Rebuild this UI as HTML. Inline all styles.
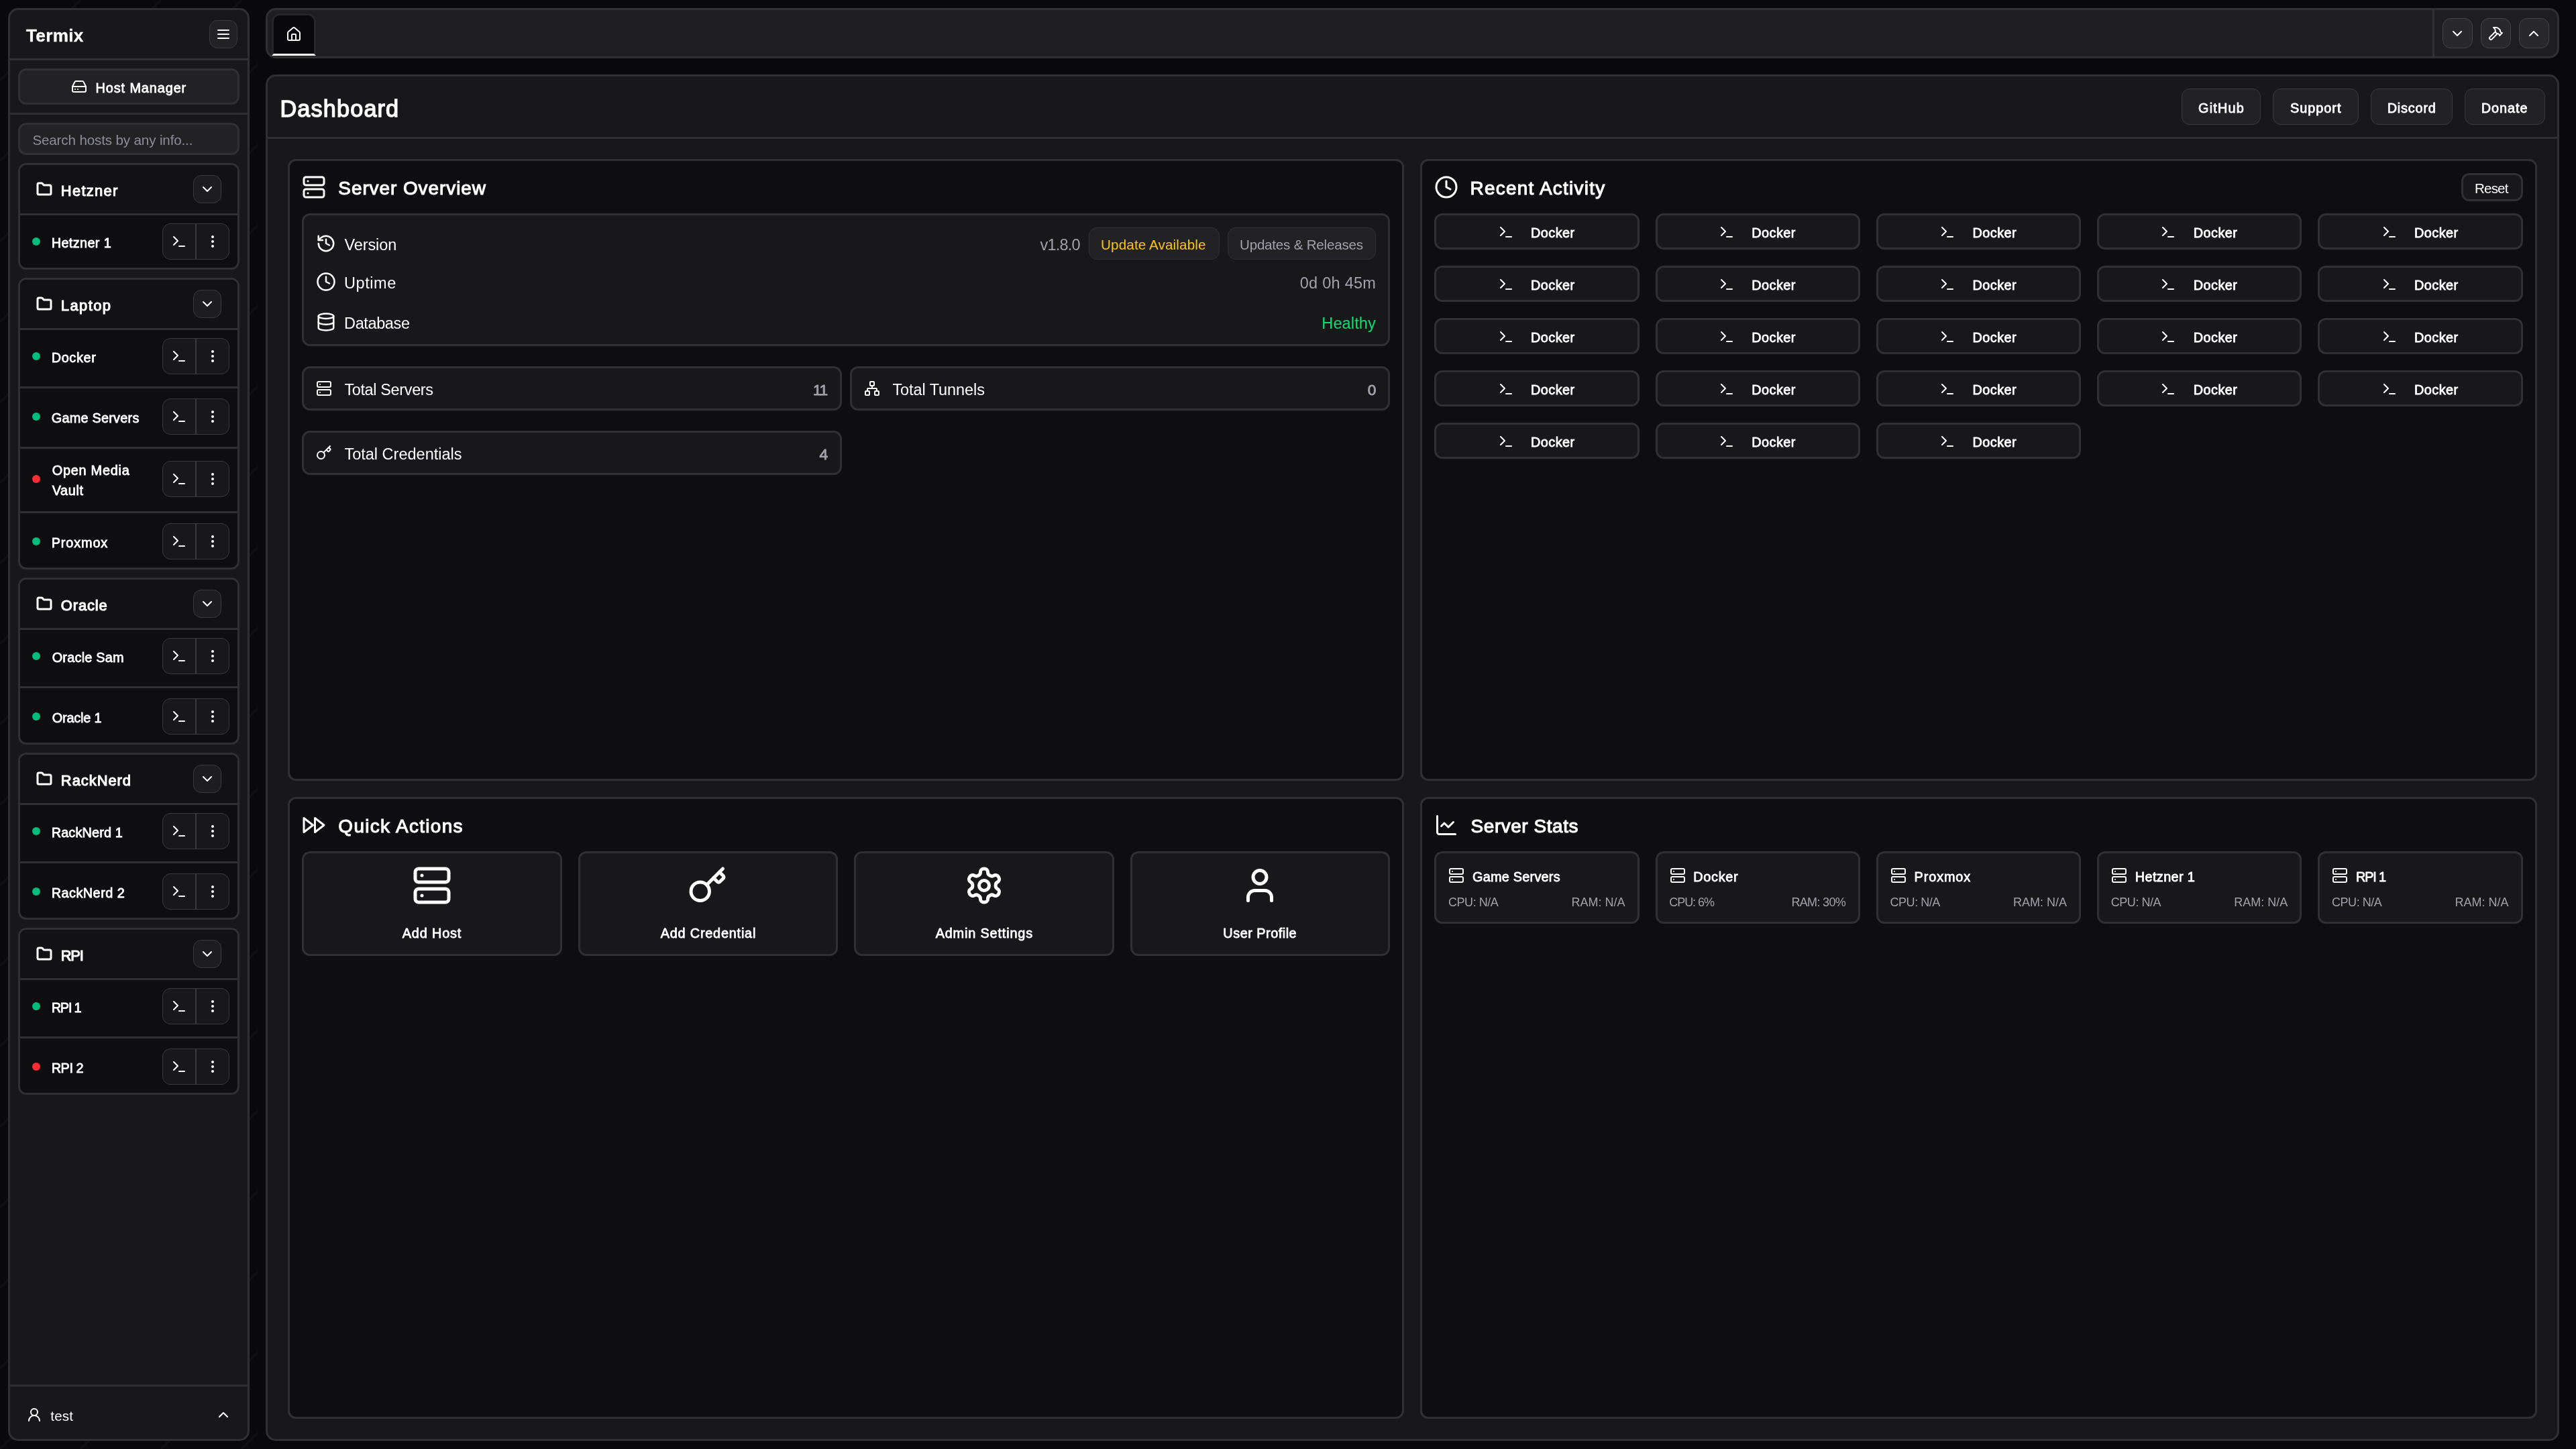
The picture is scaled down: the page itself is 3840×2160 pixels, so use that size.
<!DOCTYPE html>
<html lang="en"><head><meta charset="utf-8"><title>Termix</title><meta name="viewport" content="width=3840"><style>
html,body{margin:0;padding:0;}
body{width:3840px;height:2160px;overflow:hidden;background:#09090b;position:relative;font-family:"Liberation Sans", sans-serif;}
#app{position:absolute;left:0;top:0;width:3840px;height:2160px;overflow:hidden;will-change:transform;}
#app div,#app svg,#app span{position:absolute;}
#app span{white-space:nowrap;}
.pat{background-image:linear-gradient(135deg,transparent 0%,transparent 49%,rgba(255,255,255,.03) 49%,rgba(255,255,255,.03) 51%,transparent 51%,transparent 100%);background-size:120px 120px;}
</style></head><body><div id="app">
<div class="pat" style="left:0;top:0;width:384px;height:2160px"></div>
<div style="left:12px;top:12px;width:360px;height:2136px;background:#18181b;border:3px solid #303032;border-radius:15px;box-sizing:border-box;"></div>
<div style="left:312px;top:30px;width:42px;height:42px;background:#222225;border:1.5px solid #3a3a3d;border-radius:12px;box-sizing:border-box;"></div>
<svg style="left:321px;top:39px" width="24" height="24" viewBox="0 0 24 24" fill="none" stroke="#ffffff" stroke-width="2" stroke-linecap="round" stroke-linejoin="round"><path d="M4 12h16"/><path d="M4 18h16"/><path d="M4 6h16"/></svg>
<div style="left:15px;top:87px;width:354px;height:3px;background:#303032;"></div>
<div style="left:27px;top:102px;width:330px;height:54px;background:#222225;border:3px solid #303032;border-radius:12px;box-sizing:border-box;"></div>
<svg style="left:105.5px;top:117px" width="24" height="24" viewBox="0 0 24 24" fill="none" stroke="#ffffff" stroke-width="2" stroke-linecap="round" stroke-linejoin="round"><line x1="22" x2="2" y1="12" y2="12"/><path d="M5.45 5.11 2 12v6a2 2 0 0 0 2 2h16a2 2 0 0 0 2-2v-6l-3.45-6.89A2 2 0 0 0 16.76 4H7.24a2 2 0 0 0-1.79 1.11z"/><line x1="6" x2="6.01" y1="16" y2="16"/><line x1="10" x2="10.01" y1="16" y2="16"/></svg>
<div style="left:15px;top:168px;width:354px;height:3px;background:#303032;"></div>
<div style="left:27px;top:183px;width:330px;height:48px;background:#222225;border:3px solid #303032;border-radius:12px;box-sizing:border-box;"></div>
<div style="left:27px;top:243px;width:330px;height:159px;background:#0e0e10;border:3px solid #303032;border-radius:12px;box-sizing:border-box;"></div>
<div style="left:30px;top:246px;width:324px;height:72px;background:#121214;border-radius:9px 9px 0 0;"></div>
<div style="left:30px;top:318px;width:324px;height:3px;background:#303032;"></div>
<svg style="left:53.6px;top:270px" width="24" height="24" viewBox="0 0 24 24" fill="none" stroke="#ffffff" stroke-width="3" stroke-linecap="round" stroke-linejoin="round"><path d="M20 20a2 2 0 0 0 2-2V8a2 2 0 0 0-2-2h-7.9a2 2 0 0 1-1.69-.9L9.6 3.9A2 2 0 0 0 7.93 3H4a2 2 0 0 0-2 2v13a2 2 0 0 0 2 2Z"/></svg>
<div style="left:288px;top:261px;width:42px;height:42px;background:#1d1d20;border:1.5px solid #3a3a3d;border-radius:12px;box-sizing:border-box;"></div>
<svg style="left:297px;top:270px" width="24" height="24" viewBox="0 0 24 24" fill="none" stroke="#ffffff" stroke-width="2" stroke-linecap="round" stroke-linejoin="round"><path d="m6 9 6 6 6-6"/></svg>
<div style="left:48px;top:354px;width:12px;height:12px;background:#00bc7d;border-radius:6px;"></div>
<div style="left:242px;top:333px;width:100px;height:54px;background:#18181b;border:1.5px solid #3a3a3d;border-radius:12px;box-sizing:border-box;"></div>
<div style="left:291.25px;top:333px;width:1.5px;height:54px;background:#3a3a3d;"></div>
<svg style="left:254.5px;top:348px" width="24" height="24" viewBox="0 0 24 24" fill="none" stroke="#ffffff" stroke-width="2" stroke-linecap="round" stroke-linejoin="round"><polyline points="4 17 10 11 4 5"/><line x1="12" x2="20" y1="19" y2="19"/></svg>
<svg style="left:304.8px;top:348px" width="24" height="24" viewBox="0 0 24 24" fill="none" stroke="#ffffff" stroke-width="2" stroke-linecap="round" stroke-linejoin="round"><circle cx="12" cy="12" r="1"/><circle cx="12" cy="5" r="1"/><circle cx="12" cy="19" r="1"/></svg>
<div style="left:27px;top:414px;width:330px;height:435px;background:#0e0e10;border:3px solid #303032;border-radius:12px;box-sizing:border-box;"></div>
<div style="left:30px;top:417px;width:324px;height:72px;background:#121214;border-radius:9px 9px 0 0;"></div>
<div style="left:30px;top:489px;width:324px;height:3px;background:#303032;"></div>
<svg style="left:53.6px;top:441px" width="24" height="24" viewBox="0 0 24 24" fill="none" stroke="#ffffff" stroke-width="3" stroke-linecap="round" stroke-linejoin="round"><path d="M20 20a2 2 0 0 0 2-2V8a2 2 0 0 0-2-2h-7.9a2 2 0 0 1-1.69-.9L9.6 3.9A2 2 0 0 0 7.93 3H4a2 2 0 0 0-2 2v13a2 2 0 0 0 2 2Z"/></svg>
<div style="left:288px;top:432px;width:42px;height:42px;background:#1d1d20;border:1.5px solid #3a3a3d;border-radius:12px;box-sizing:border-box;"></div>
<svg style="left:297px;top:441px" width="24" height="24" viewBox="0 0 24 24" fill="none" stroke="#ffffff" stroke-width="2" stroke-linecap="round" stroke-linejoin="round"><path d="m6 9 6 6 6-6"/></svg>
<div style="left:48px;top:525px;width:12px;height:12px;background:#00bc7d;border-radius:6px;"></div>
<div style="left:242px;top:504px;width:100px;height:54px;background:#18181b;border:1.5px solid #3a3a3d;border-radius:12px;box-sizing:border-box;"></div>
<div style="left:291.25px;top:504px;width:1.5px;height:54px;background:#3a3a3d;"></div>
<svg style="left:254.5px;top:519px" width="24" height="24" viewBox="0 0 24 24" fill="none" stroke="#ffffff" stroke-width="2" stroke-linecap="round" stroke-linejoin="round"><polyline points="4 17 10 11 4 5"/><line x1="12" x2="20" y1="19" y2="19"/></svg>
<svg style="left:304.8px;top:519px" width="24" height="24" viewBox="0 0 24 24" fill="none" stroke="#ffffff" stroke-width="2" stroke-linecap="round" stroke-linejoin="round"><circle cx="12" cy="12" r="1"/><circle cx="12" cy="5" r="1"/><circle cx="12" cy="19" r="1"/></svg>
<div style="left:30px;top:576px;width:324px;height:3px;background:#303032;"></div>
<div style="left:48px;top:615px;width:12px;height:12px;background:#00bc7d;border-radius:6px;"></div>
<div style="left:242px;top:594px;width:100px;height:54px;background:#18181b;border:1.5px solid #3a3a3d;border-radius:12px;box-sizing:border-box;"></div>
<div style="left:291.25px;top:594px;width:1.5px;height:54px;background:#3a3a3d;"></div>
<svg style="left:254.5px;top:609px" width="24" height="24" viewBox="0 0 24 24" fill="none" stroke="#ffffff" stroke-width="2" stroke-linecap="round" stroke-linejoin="round"><polyline points="4 17 10 11 4 5"/><line x1="12" x2="20" y1="19" y2="19"/></svg>
<svg style="left:304.8px;top:609px" width="24" height="24" viewBox="0 0 24 24" fill="none" stroke="#ffffff" stroke-width="2" stroke-linecap="round" stroke-linejoin="round"><circle cx="12" cy="12" r="1"/><circle cx="12" cy="5" r="1"/><circle cx="12" cy="19" r="1"/></svg>
<div style="left:30px;top:666px;width:324px;height:3px;background:#303032;"></div>
<div style="left:48px;top:708px;width:12px;height:12px;background:#fb2c36;border-radius:6px;"></div>
<div style="left:242px;top:687px;width:100px;height:54px;background:#18181b;border:1.5px solid #3a3a3d;border-radius:12px;box-sizing:border-box;"></div>
<div style="left:291.25px;top:687px;width:1.5px;height:54px;background:#3a3a3d;"></div>
<svg style="left:254.5px;top:702px" width="24" height="24" viewBox="0 0 24 24" fill="none" stroke="#ffffff" stroke-width="2" stroke-linecap="round" stroke-linejoin="round"><polyline points="4 17 10 11 4 5"/><line x1="12" x2="20" y1="19" y2="19"/></svg>
<svg style="left:304.8px;top:702px" width="24" height="24" viewBox="0 0 24 24" fill="none" stroke="#ffffff" stroke-width="2" stroke-linecap="round" stroke-linejoin="round"><circle cx="12" cy="12" r="1"/><circle cx="12" cy="5" r="1"/><circle cx="12" cy="19" r="1"/></svg>
<div style="left:30px;top:762px;width:324px;height:3px;background:#303032;"></div>
<div style="left:48px;top:801px;width:12px;height:12px;background:#00bc7d;border-radius:6px;"></div>
<div style="left:242px;top:780px;width:100px;height:54px;background:#18181b;border:1.5px solid #3a3a3d;border-radius:12px;box-sizing:border-box;"></div>
<div style="left:291.25px;top:780px;width:1.5px;height:54px;background:#3a3a3d;"></div>
<svg style="left:254.5px;top:795px" width="24" height="24" viewBox="0 0 24 24" fill="none" stroke="#ffffff" stroke-width="2" stroke-linecap="round" stroke-linejoin="round"><polyline points="4 17 10 11 4 5"/><line x1="12" x2="20" y1="19" y2="19"/></svg>
<svg style="left:304.8px;top:795px" width="24" height="24" viewBox="0 0 24 24" fill="none" stroke="#ffffff" stroke-width="2" stroke-linecap="round" stroke-linejoin="round"><circle cx="12" cy="12" r="1"/><circle cx="12" cy="5" r="1"/><circle cx="12" cy="19" r="1"/></svg>
<div style="left:27px;top:861px;width:330px;height:249px;background:#0e0e10;border:3px solid #303032;border-radius:12px;box-sizing:border-box;"></div>
<div style="left:30px;top:864px;width:324px;height:72px;background:#121214;border-radius:9px 9px 0 0;"></div>
<div style="left:30px;top:936px;width:324px;height:3px;background:#303032;"></div>
<svg style="left:53.6px;top:888px" width="24" height="24" viewBox="0 0 24 24" fill="none" stroke="#ffffff" stroke-width="3" stroke-linecap="round" stroke-linejoin="round"><path d="M20 20a2 2 0 0 0 2-2V8a2 2 0 0 0-2-2h-7.9a2 2 0 0 1-1.69-.9L9.6 3.9A2 2 0 0 0 7.93 3H4a2 2 0 0 0-2 2v13a2 2 0 0 0 2 2Z"/></svg>
<div style="left:288px;top:879px;width:42px;height:42px;background:#1d1d20;border:1.5px solid #3a3a3d;border-radius:12px;box-sizing:border-box;"></div>
<svg style="left:297px;top:888px" width="24" height="24" viewBox="0 0 24 24" fill="none" stroke="#ffffff" stroke-width="2" stroke-linecap="round" stroke-linejoin="round"><path d="m6 9 6 6 6-6"/></svg>
<div style="left:48px;top:972px;width:12px;height:12px;background:#00bc7d;border-radius:6px;"></div>
<div style="left:242px;top:951px;width:100px;height:54px;background:#18181b;border:1.5px solid #3a3a3d;border-radius:12px;box-sizing:border-box;"></div>
<div style="left:291.25px;top:951px;width:1.5px;height:54px;background:#3a3a3d;"></div>
<svg style="left:254.5px;top:966px" width="24" height="24" viewBox="0 0 24 24" fill="none" stroke="#ffffff" stroke-width="2" stroke-linecap="round" stroke-linejoin="round"><polyline points="4 17 10 11 4 5"/><line x1="12" x2="20" y1="19" y2="19"/></svg>
<svg style="left:304.8px;top:966px" width="24" height="24" viewBox="0 0 24 24" fill="none" stroke="#ffffff" stroke-width="2" stroke-linecap="round" stroke-linejoin="round"><circle cx="12" cy="12" r="1"/><circle cx="12" cy="5" r="1"/><circle cx="12" cy="19" r="1"/></svg>
<div style="left:30px;top:1023px;width:324px;height:3px;background:#303032;"></div>
<div style="left:48px;top:1062px;width:12px;height:12px;background:#00bc7d;border-radius:6px;"></div>
<div style="left:242px;top:1041px;width:100px;height:54px;background:#18181b;border:1.5px solid #3a3a3d;border-radius:12px;box-sizing:border-box;"></div>
<div style="left:291.25px;top:1041px;width:1.5px;height:54px;background:#3a3a3d;"></div>
<svg style="left:254.5px;top:1056px" width="24" height="24" viewBox="0 0 24 24" fill="none" stroke="#ffffff" stroke-width="2" stroke-linecap="round" stroke-linejoin="round"><polyline points="4 17 10 11 4 5"/><line x1="12" x2="20" y1="19" y2="19"/></svg>
<svg style="left:304.8px;top:1056px" width="24" height="24" viewBox="0 0 24 24" fill="none" stroke="#ffffff" stroke-width="2" stroke-linecap="round" stroke-linejoin="round"><circle cx="12" cy="12" r="1"/><circle cx="12" cy="5" r="1"/><circle cx="12" cy="19" r="1"/></svg>
<div style="left:27px;top:1122px;width:330px;height:249px;background:#0e0e10;border:3px solid #303032;border-radius:12px;box-sizing:border-box;"></div>
<div style="left:30px;top:1125px;width:324px;height:72px;background:#121214;border-radius:9px 9px 0 0;"></div>
<div style="left:30px;top:1197px;width:324px;height:3px;background:#303032;"></div>
<svg style="left:53.6px;top:1149px" width="24" height="24" viewBox="0 0 24 24" fill="none" stroke="#ffffff" stroke-width="3" stroke-linecap="round" stroke-linejoin="round"><path d="M20 20a2 2 0 0 0 2-2V8a2 2 0 0 0-2-2h-7.9a2 2 0 0 1-1.69-.9L9.6 3.9A2 2 0 0 0 7.93 3H4a2 2 0 0 0-2 2v13a2 2 0 0 0 2 2Z"/></svg>
<div style="left:288px;top:1140px;width:42px;height:42px;background:#1d1d20;border:1.5px solid #3a3a3d;border-radius:12px;box-sizing:border-box;"></div>
<svg style="left:297px;top:1149px" width="24" height="24" viewBox="0 0 24 24" fill="none" stroke="#ffffff" stroke-width="2" stroke-linecap="round" stroke-linejoin="round"><path d="m6 9 6 6 6-6"/></svg>
<div style="left:48px;top:1233px;width:12px;height:12px;background:#00bc7d;border-radius:6px;"></div>
<div style="left:242px;top:1212px;width:100px;height:54px;background:#18181b;border:1.5px solid #3a3a3d;border-radius:12px;box-sizing:border-box;"></div>
<div style="left:291.25px;top:1212px;width:1.5px;height:54px;background:#3a3a3d;"></div>
<svg style="left:254.5px;top:1227px" width="24" height="24" viewBox="0 0 24 24" fill="none" stroke="#ffffff" stroke-width="2" stroke-linecap="round" stroke-linejoin="round"><polyline points="4 17 10 11 4 5"/><line x1="12" x2="20" y1="19" y2="19"/></svg>
<svg style="left:304.8px;top:1227px" width="24" height="24" viewBox="0 0 24 24" fill="none" stroke="#ffffff" stroke-width="2" stroke-linecap="round" stroke-linejoin="round"><circle cx="12" cy="12" r="1"/><circle cx="12" cy="5" r="1"/><circle cx="12" cy="19" r="1"/></svg>
<div style="left:30px;top:1284px;width:324px;height:3px;background:#303032;"></div>
<div style="left:48px;top:1323px;width:12px;height:12px;background:#00bc7d;border-radius:6px;"></div>
<div style="left:242px;top:1302px;width:100px;height:54px;background:#18181b;border:1.5px solid #3a3a3d;border-radius:12px;box-sizing:border-box;"></div>
<div style="left:291.25px;top:1302px;width:1.5px;height:54px;background:#3a3a3d;"></div>
<svg style="left:254.5px;top:1317px" width="24" height="24" viewBox="0 0 24 24" fill="none" stroke="#ffffff" stroke-width="2" stroke-linecap="round" stroke-linejoin="round"><polyline points="4 17 10 11 4 5"/><line x1="12" x2="20" y1="19" y2="19"/></svg>
<svg style="left:304.8px;top:1317px" width="24" height="24" viewBox="0 0 24 24" fill="none" stroke="#ffffff" stroke-width="2" stroke-linecap="round" stroke-linejoin="round"><circle cx="12" cy="12" r="1"/><circle cx="12" cy="5" r="1"/><circle cx="12" cy="19" r="1"/></svg>
<div style="left:27px;top:1383px;width:330px;height:249px;background:#0e0e10;border:3px solid #303032;border-radius:12px;box-sizing:border-box;"></div>
<div style="left:30px;top:1386px;width:324px;height:72px;background:#121214;border-radius:9px 9px 0 0;"></div>
<div style="left:30px;top:1458px;width:324px;height:3px;background:#303032;"></div>
<svg style="left:53.6px;top:1410px" width="24" height="24" viewBox="0 0 24 24" fill="none" stroke="#ffffff" stroke-width="3" stroke-linecap="round" stroke-linejoin="round"><path d="M20 20a2 2 0 0 0 2-2V8a2 2 0 0 0-2-2h-7.9a2 2 0 0 1-1.69-.9L9.6 3.9A2 2 0 0 0 7.93 3H4a2 2 0 0 0-2 2v13a2 2 0 0 0 2 2Z"/></svg>
<div style="left:288px;top:1401px;width:42px;height:42px;background:#1d1d20;border:1.5px solid #3a3a3d;border-radius:12px;box-sizing:border-box;"></div>
<svg style="left:297px;top:1410px" width="24" height="24" viewBox="0 0 24 24" fill="none" stroke="#ffffff" stroke-width="2" stroke-linecap="round" stroke-linejoin="round"><path d="m6 9 6 6 6-6"/></svg>
<div style="left:48px;top:1494px;width:12px;height:12px;background:#00bc7d;border-radius:6px;"></div>
<div style="left:242px;top:1473px;width:100px;height:54px;background:#18181b;border:1.5px solid #3a3a3d;border-radius:12px;box-sizing:border-box;"></div>
<div style="left:291.25px;top:1473px;width:1.5px;height:54px;background:#3a3a3d;"></div>
<svg style="left:254.5px;top:1488px" width="24" height="24" viewBox="0 0 24 24" fill="none" stroke="#ffffff" stroke-width="2" stroke-linecap="round" stroke-linejoin="round"><polyline points="4 17 10 11 4 5"/><line x1="12" x2="20" y1="19" y2="19"/></svg>
<svg style="left:304.8px;top:1488px" width="24" height="24" viewBox="0 0 24 24" fill="none" stroke="#ffffff" stroke-width="2" stroke-linecap="round" stroke-linejoin="round"><circle cx="12" cy="12" r="1"/><circle cx="12" cy="5" r="1"/><circle cx="12" cy="19" r="1"/></svg>
<div style="left:30px;top:1545px;width:324px;height:3px;background:#303032;"></div>
<div style="left:48px;top:1584px;width:12px;height:12px;background:#fb2c36;border-radius:6px;"></div>
<div style="left:242px;top:1563px;width:100px;height:54px;background:#18181b;border:1.5px solid #3a3a3d;border-radius:12px;box-sizing:border-box;"></div>
<div style="left:291.25px;top:1563px;width:1.5px;height:54px;background:#3a3a3d;"></div>
<svg style="left:254.5px;top:1578px" width="24" height="24" viewBox="0 0 24 24" fill="none" stroke="#ffffff" stroke-width="2" stroke-linecap="round" stroke-linejoin="round"><polyline points="4 17 10 11 4 5"/><line x1="12" x2="20" y1="19" y2="19"/></svg>
<svg style="left:304.8px;top:1578px" width="24" height="24" viewBox="0 0 24 24" fill="none" stroke="#ffffff" stroke-width="2" stroke-linecap="round" stroke-linejoin="round"><circle cx="12" cy="12" r="1"/><circle cx="12" cy="5" r="1"/><circle cx="12" cy="19" r="1"/></svg>
<div style="left:15px;top:2064px;width:354px;height:3px;background:#303032;"></div>
<svg style="left:39px;top:2097px" width="24" height="24" viewBox="0 0 24 24" fill="none" stroke="#ffffff" stroke-width="2" stroke-linecap="round" stroke-linejoin="round"><circle cx="12" cy="8" r="5"/><path d="M20 21a8 8 0 0 0-16 0"/></svg>
<svg style="left:321px;top:2097px" width="24" height="24" viewBox="0 0 24 24" fill="none" stroke="#ffffff" stroke-width="2" stroke-linecap="round" stroke-linejoin="round"><path d="m18 15-6-6-6 6"/></svg>
<div style="left:396px;top:12px;width:3418.5px;height:75px;background:#1e1e21;border:3px solid #303032;border-radius:15px;box-sizing:border-box;"></div>
<div style="left:405px;top:20px;width:66px;height:63px;box-sizing:border-box;background:#09090b;border:3px solid #262629;border-bottom-color:#fff;border-radius:12px 12px 0 0"></div>
<svg style="left:426px;top:39px" width="24" height="24" viewBox="0 0 24 24" fill="none" stroke="#ffffff" stroke-width="2" stroke-linecap="round" stroke-linejoin="round"><path d="M15 21v-8a1 1 0 0 0-1-1h-4a1 1 0 0 0-1 1v8"/><path d="M3 10a2 2 0 0 1 .709-1.528l7-5.999a2 2 0 0 1 2.582 0l7 5.999A2 2 0 0 1 21 10v9a2 2 0 0 1-2 2H5a2 2 0 0 1-2-2z"/></svg>
<div style="left:3626px;top:15px;width:3px;height:69px;background:#303032;"></div>
<div style="left:3641px;top:27px;width:45px;height:45px;background:#29292c;border:1.5px solid #434346;border-radius:12px;box-sizing:border-box;"></div>
<svg style="left:3651px;top:37.5px" width="24" height="24" viewBox="0 0 24 24" fill="none" stroke="#ffffff" stroke-width="2" stroke-linecap="round" stroke-linejoin="round"><path d="m6 9 6 6 6-6"/></svg>
<div style="left:3698px;top:27px;width:45px;height:45px;background:#29292c;border:1.5px solid #434346;border-radius:12px;box-sizing:border-box;"></div>
<svg style="left:3708px;top:37.5px" width="24" height="24" viewBox="0 0 24 24" fill="none" stroke="#ffffff" stroke-width="2" stroke-linecap="round" stroke-linejoin="round"><path d="m15 12-8.373 8.373a1 1 0 1 1-3-3L12 9"/><path d="m18 15 4-4"/><path d="m21.5 11.5-1.914-1.914A2 2 0 0 1 19 8.172V7l-2.26-2.26a6 6 0 0 0-4.202-1.756L9 2.96l.92.82A6.18 6.18 0 0 1 12 8.4V10l2 2h1.172a2 2 0 0 1 1.414.586L18.5 14.5"/></svg>
<div style="left:3755px;top:27px;width:45px;height:45px;background:#29292c;border:1.5px solid #434346;border-radius:12px;box-sizing:border-box;"></div>
<svg style="left:3765px;top:37.5px" width="24" height="24" viewBox="0 0 24 24" fill="none" stroke="#ffffff" stroke-width="2" stroke-linecap="round" stroke-linejoin="round"><path d="m18 15-6-6-6 6"/></svg>
<div style="left:396px;top:111px;width:3418.5px;height:2037px;background:#18181b;border:3px solid #303032;border-radius:15px;box-sizing:border-box;"></div>
<div style="left:399px;top:204px;width:3412.5px;height:3px;background:#303032;"></div>
<div style="left:3252px;top:132px;width:118px;height:54px;background:#222225;border:1.5px solid #3a3a3d;border-radius:12px;box-sizing:border-box;"></div>
<div style="left:3388px;top:132px;width:128px;height:54px;background:#222225;border:1.5px solid #3a3a3d;border-radius:12px;box-sizing:border-box;"></div>
<div style="left:3534px;top:132px;width:122px;height:54px;background:#222225;border:1.5px solid #3a3a3d;border-radius:12px;box-sizing:border-box;"></div>
<div style="left:3674px;top:132px;width:120px;height:54px;background:#222225;border:1.5px solid #3a3a3d;border-radius:12px;box-sizing:border-box;"></div>
<div style="left:429px;top:237px;width:1664.25px;height:927px;background:#0e0e10;border:3px solid #303032;border-radius:12px;box-sizing:border-box;"></div>
<div style="left:429px;top:1188px;width:1664.25px;height:927px;background:#0e0e10;border:3px solid #303032;border-radius:12px;box-sizing:border-box;"></div>
<div style="left:2117.25px;top:237px;width:1664.25px;height:927px;background:#0e0e10;border:3px solid #303032;border-radius:12px;box-sizing:border-box;"></div>
<div style="left:2117.25px;top:1188px;width:1664.25px;height:927px;background:#0e0e10;border:3px solid #303032;border-radius:12px;box-sizing:border-box;"></div>
<svg style="left:450px;top:261px" width="36" height="36" viewBox="0 0 24 24" fill="none" stroke="#ffffff" stroke-width="2" stroke-linecap="round" stroke-linejoin="round"><rect width="20" height="8" x="2" y="2" rx="2" ry="2"/><rect width="20" height="8" x="2" y="14" rx="2" ry="2"/><line x1="6" x2="6.01" y1="6" y2="6"/><line x1="6" x2="6.01" y1="18" y2="18"/></svg>
<svg style="left:2138.25px;top:261px" width="36" height="36" viewBox="0 0 24 24" fill="none" stroke="#ffffff" stroke-width="2" stroke-linecap="round" stroke-linejoin="round"><circle cx="12" cy="12" r="10"/><polyline points="12 6 12 12 16 14"/></svg>
<svg style="left:450px;top:1212px" width="36" height="36" viewBox="0 0 24 24" fill="none" stroke="#ffffff" stroke-width="2" stroke-linecap="round" stroke-linejoin="round"><polygon points="13 19 22 12 13 5 13 19"/><polygon points="2 19 11 12 2 5 2 19"/></svg>
<svg style="left:2138.25px;top:1212px" width="36" height="36" viewBox="0 0 24 24" fill="none" stroke="#ffffff" stroke-width="2" stroke-linecap="round" stroke-linejoin="round"><path d="M3 3v16a2 2 0 0 0 2 2h16"/><path d="m19 9-5 5-4-4-3 3"/></svg>
<div style="left:450px;top:318px;width:1622.25px;height:198px;background:#18181b;border:3px solid #303032;border-radius:12px;box-sizing:border-box;"></div>
<svg style="left:471px;top:348px" width="30" height="30" viewBox="0 0 24 24" fill="none" stroke="#ffffff" stroke-width="2" stroke-linecap="round" stroke-linejoin="round"><path d="M3 12a9 9 0 1 0 9-9 9.75 9.75 0 0 0-6.74 2.74L3 8"/><path d="M3 3v5h5"/><path d="M12 7v5l4 2"/></svg>
<svg style="left:471px;top:405px" width="30" height="30" viewBox="0 0 24 24" fill="none" stroke="#ffffff" stroke-width="2" stroke-linecap="round" stroke-linejoin="round"><circle cx="12" cy="12" r="10"/><polyline points="12 6 12 12 16 14"/></svg>
<svg style="left:471px;top:465px" width="30" height="30" viewBox="0 0 24 24" fill="none" stroke="#ffffff" stroke-width="2" stroke-linecap="round" stroke-linejoin="round"><ellipse cx="12" cy="5" rx="9" ry="3"/><path d="M3 5V19A9 3 0 0 0 21 19V5"/><path d="M3 12A9 3 0 0 0 21 12"/></svg>
<div style="left:1830px;top:339px;width:221px;height:48px;background:#222225;border:1.5px solid #303032;border-radius:12px;box-sizing:border-box;"></div>
<div style="left:1623px;top:339px;width:195px;height:48px;background:#222225;border:1.5px solid #303032;border-radius:12px;box-sizing:border-box;"></div>
<div style="left:450px;top:546px;width:805px;height:66px;background:#18181b;border:3px solid #303032;border-radius:12px;box-sizing:border-box;"></div>
<svg style="left:471px;top:567px" width="24" height="24" viewBox="0 0 24 24" fill="none" stroke="#ffffff" stroke-width="2" stroke-linecap="round" stroke-linejoin="round"><rect width="20" height="8" x="2" y="2" rx="2" ry="2"/><rect width="20" height="8" x="2" y="14" rx="2" ry="2"/><line x1="6" x2="6.01" y1="6" y2="6"/><line x1="6" x2="6.01" y1="18" y2="18"/></svg>
<div style="left:1267px;top:546px;width:805.25px;height:66px;background:#18181b;border:3px solid #303032;border-radius:12px;box-sizing:border-box;"></div>
<svg style="left:1288px;top:567px" width="24" height="24" viewBox="0 0 24 24" fill="none" stroke="#ffffff" stroke-width="2" stroke-linecap="round" stroke-linejoin="round"><rect x="16" y="16" width="6" height="6" rx="1"/><rect x="2" y="16" width="6" height="6" rx="1"/><rect x="9" y="2" width="6" height="6" rx="1"/><path d="M5 16v-3a1 1 0 0 1 1-1h12a1 1 0 0 1 1 1v3"/><path d="M12 12V8"/></svg>
<div style="left:450px;top:642px;width:805px;height:66px;background:#18181b;border:3px solid #303032;border-radius:12px;box-sizing:border-box;"></div>
<svg style="left:471px;top:663px" width="24" height="24" viewBox="0 0 24 24" fill="none" stroke="#ffffff" stroke-width="2" stroke-linecap="round" stroke-linejoin="round"><path d="m15.5 7.5 2.3 2.3a1 1 0 0 0 1.4 0l2.1-2.1a1 1 0 0 0 0-1.4L19 4"/><path d="m21 2-9.6 9.6"/><circle cx="7.5" cy="15.5" r="5.5"/></svg>
<div style="left:3669px;top:258px;width:91.5px;height:42px;background:#18181b;border:3px solid #303032;border-radius:12px;box-sizing:border-box;"></div>
<div style="left:2138.25px;top:318px;width:305.25px;height:54px;background:#18181b;border:3px solid #303032;border-radius:12px;box-sizing:border-box;"></div>
<svg style="left:2232.7px;top:333.5px" width="24" height="24" viewBox="0 0 24 24" fill="none" stroke="#ffffff" stroke-width="2" stroke-linecap="round" stroke-linejoin="round"><polyline points="4 17 10 11 4 5"/><line x1="12" x2="20" y1="19" y2="19"/></svg>
<div style="left:2467.5px;top:318px;width:305.25px;height:54px;background:#18181b;border:3px solid #303032;border-radius:12px;box-sizing:border-box;"></div>
<svg style="left:2561.95px;top:333.5px" width="24" height="24" viewBox="0 0 24 24" fill="none" stroke="#ffffff" stroke-width="2" stroke-linecap="round" stroke-linejoin="round"><polyline points="4 17 10 11 4 5"/><line x1="12" x2="20" y1="19" y2="19"/></svg>
<div style="left:2796.75px;top:318px;width:305.25px;height:54px;background:#18181b;border:3px solid #303032;border-radius:12px;box-sizing:border-box;"></div>
<svg style="left:2891.2px;top:333.5px" width="24" height="24" viewBox="0 0 24 24" fill="none" stroke="#ffffff" stroke-width="2" stroke-linecap="round" stroke-linejoin="round"><polyline points="4 17 10 11 4 5"/><line x1="12" x2="20" y1="19" y2="19"/></svg>
<div style="left:3126px;top:318px;width:305.25px;height:54px;background:#18181b;border:3px solid #303032;border-radius:12px;box-sizing:border-box;"></div>
<svg style="left:3220.45px;top:333.5px" width="24" height="24" viewBox="0 0 24 24" fill="none" stroke="#ffffff" stroke-width="2" stroke-linecap="round" stroke-linejoin="round"><polyline points="4 17 10 11 4 5"/><line x1="12" x2="20" y1="19" y2="19"/></svg>
<div style="left:3455.25px;top:318px;width:305.25px;height:54px;background:#18181b;border:3px solid #303032;border-radius:12px;box-sizing:border-box;"></div>
<svg style="left:3549.7px;top:333.5px" width="24" height="24" viewBox="0 0 24 24" fill="none" stroke="#ffffff" stroke-width="2" stroke-linecap="round" stroke-linejoin="round"><polyline points="4 17 10 11 4 5"/><line x1="12" x2="20" y1="19" y2="19"/></svg>
<div style="left:2138.25px;top:396px;width:305.25px;height:54px;background:#18181b;border:3px solid #303032;border-radius:12px;box-sizing:border-box;"></div>
<svg style="left:2232.7px;top:411.5px" width="24" height="24" viewBox="0 0 24 24" fill="none" stroke="#ffffff" stroke-width="2" stroke-linecap="round" stroke-linejoin="round"><polyline points="4 17 10 11 4 5"/><line x1="12" x2="20" y1="19" y2="19"/></svg>
<div style="left:2467.5px;top:396px;width:305.25px;height:54px;background:#18181b;border:3px solid #303032;border-radius:12px;box-sizing:border-box;"></div>
<svg style="left:2561.95px;top:411.5px" width="24" height="24" viewBox="0 0 24 24" fill="none" stroke="#ffffff" stroke-width="2" stroke-linecap="round" stroke-linejoin="round"><polyline points="4 17 10 11 4 5"/><line x1="12" x2="20" y1="19" y2="19"/></svg>
<div style="left:2796.75px;top:396px;width:305.25px;height:54px;background:#18181b;border:3px solid #303032;border-radius:12px;box-sizing:border-box;"></div>
<svg style="left:2891.2px;top:411.5px" width="24" height="24" viewBox="0 0 24 24" fill="none" stroke="#ffffff" stroke-width="2" stroke-linecap="round" stroke-linejoin="round"><polyline points="4 17 10 11 4 5"/><line x1="12" x2="20" y1="19" y2="19"/></svg>
<div style="left:3126px;top:396px;width:305.25px;height:54px;background:#18181b;border:3px solid #303032;border-radius:12px;box-sizing:border-box;"></div>
<svg style="left:3220.45px;top:411.5px" width="24" height="24" viewBox="0 0 24 24" fill="none" stroke="#ffffff" stroke-width="2" stroke-linecap="round" stroke-linejoin="round"><polyline points="4 17 10 11 4 5"/><line x1="12" x2="20" y1="19" y2="19"/></svg>
<div style="left:3455.25px;top:396px;width:305.25px;height:54px;background:#18181b;border:3px solid #303032;border-radius:12px;box-sizing:border-box;"></div>
<svg style="left:3549.7px;top:411.5px" width="24" height="24" viewBox="0 0 24 24" fill="none" stroke="#ffffff" stroke-width="2" stroke-linecap="round" stroke-linejoin="round"><polyline points="4 17 10 11 4 5"/><line x1="12" x2="20" y1="19" y2="19"/></svg>
<div style="left:2138.25px;top:474px;width:305.25px;height:54px;background:#18181b;border:3px solid #303032;border-radius:12px;box-sizing:border-box;"></div>
<svg style="left:2232.7px;top:489.5px" width="24" height="24" viewBox="0 0 24 24" fill="none" stroke="#ffffff" stroke-width="2" stroke-linecap="round" stroke-linejoin="round"><polyline points="4 17 10 11 4 5"/><line x1="12" x2="20" y1="19" y2="19"/></svg>
<div style="left:2467.5px;top:474px;width:305.25px;height:54px;background:#18181b;border:3px solid #303032;border-radius:12px;box-sizing:border-box;"></div>
<svg style="left:2561.95px;top:489.5px" width="24" height="24" viewBox="0 0 24 24" fill="none" stroke="#ffffff" stroke-width="2" stroke-linecap="round" stroke-linejoin="round"><polyline points="4 17 10 11 4 5"/><line x1="12" x2="20" y1="19" y2="19"/></svg>
<div style="left:2796.75px;top:474px;width:305.25px;height:54px;background:#18181b;border:3px solid #303032;border-radius:12px;box-sizing:border-box;"></div>
<svg style="left:2891.2px;top:489.5px" width="24" height="24" viewBox="0 0 24 24" fill="none" stroke="#ffffff" stroke-width="2" stroke-linecap="round" stroke-linejoin="round"><polyline points="4 17 10 11 4 5"/><line x1="12" x2="20" y1="19" y2="19"/></svg>
<div style="left:3126px;top:474px;width:305.25px;height:54px;background:#18181b;border:3px solid #303032;border-radius:12px;box-sizing:border-box;"></div>
<svg style="left:3220.45px;top:489.5px" width="24" height="24" viewBox="0 0 24 24" fill="none" stroke="#ffffff" stroke-width="2" stroke-linecap="round" stroke-linejoin="round"><polyline points="4 17 10 11 4 5"/><line x1="12" x2="20" y1="19" y2="19"/></svg>
<div style="left:3455.25px;top:474px;width:305.25px;height:54px;background:#18181b;border:3px solid #303032;border-radius:12px;box-sizing:border-box;"></div>
<svg style="left:3549.7px;top:489.5px" width="24" height="24" viewBox="0 0 24 24" fill="none" stroke="#ffffff" stroke-width="2" stroke-linecap="round" stroke-linejoin="round"><polyline points="4 17 10 11 4 5"/><line x1="12" x2="20" y1="19" y2="19"/></svg>
<div style="left:2138.25px;top:552px;width:305.25px;height:54px;background:#18181b;border:3px solid #303032;border-radius:12px;box-sizing:border-box;"></div>
<svg style="left:2232.7px;top:567.5px" width="24" height="24" viewBox="0 0 24 24" fill="none" stroke="#ffffff" stroke-width="2" stroke-linecap="round" stroke-linejoin="round"><polyline points="4 17 10 11 4 5"/><line x1="12" x2="20" y1="19" y2="19"/></svg>
<div style="left:2467.5px;top:552px;width:305.25px;height:54px;background:#18181b;border:3px solid #303032;border-radius:12px;box-sizing:border-box;"></div>
<svg style="left:2561.95px;top:567.5px" width="24" height="24" viewBox="0 0 24 24" fill="none" stroke="#ffffff" stroke-width="2" stroke-linecap="round" stroke-linejoin="round"><polyline points="4 17 10 11 4 5"/><line x1="12" x2="20" y1="19" y2="19"/></svg>
<div style="left:2796.75px;top:552px;width:305.25px;height:54px;background:#18181b;border:3px solid #303032;border-radius:12px;box-sizing:border-box;"></div>
<svg style="left:2891.2px;top:567.5px" width="24" height="24" viewBox="0 0 24 24" fill="none" stroke="#ffffff" stroke-width="2" stroke-linecap="round" stroke-linejoin="round"><polyline points="4 17 10 11 4 5"/><line x1="12" x2="20" y1="19" y2="19"/></svg>
<div style="left:3126px;top:552px;width:305.25px;height:54px;background:#18181b;border:3px solid #303032;border-radius:12px;box-sizing:border-box;"></div>
<svg style="left:3220.45px;top:567.5px" width="24" height="24" viewBox="0 0 24 24" fill="none" stroke="#ffffff" stroke-width="2" stroke-linecap="round" stroke-linejoin="round"><polyline points="4 17 10 11 4 5"/><line x1="12" x2="20" y1="19" y2="19"/></svg>
<div style="left:3455.25px;top:552px;width:305.25px;height:54px;background:#18181b;border:3px solid #303032;border-radius:12px;box-sizing:border-box;"></div>
<svg style="left:3549.7px;top:567.5px" width="24" height="24" viewBox="0 0 24 24" fill="none" stroke="#ffffff" stroke-width="2" stroke-linecap="round" stroke-linejoin="round"><polyline points="4 17 10 11 4 5"/><line x1="12" x2="20" y1="19" y2="19"/></svg>
<div style="left:2138.25px;top:630px;width:305.25px;height:54px;background:#18181b;border:3px solid #303032;border-radius:12px;box-sizing:border-box;"></div>
<svg style="left:2232.7px;top:645.5px" width="24" height="24" viewBox="0 0 24 24" fill="none" stroke="#ffffff" stroke-width="2" stroke-linecap="round" stroke-linejoin="round"><polyline points="4 17 10 11 4 5"/><line x1="12" x2="20" y1="19" y2="19"/></svg>
<div style="left:2467.5px;top:630px;width:305.25px;height:54px;background:#18181b;border:3px solid #303032;border-radius:12px;box-sizing:border-box;"></div>
<svg style="left:2561.95px;top:645.5px" width="24" height="24" viewBox="0 0 24 24" fill="none" stroke="#ffffff" stroke-width="2" stroke-linecap="round" stroke-linejoin="round"><polyline points="4 17 10 11 4 5"/><line x1="12" x2="20" y1="19" y2="19"/></svg>
<div style="left:2796.75px;top:630px;width:305.25px;height:54px;background:#18181b;border:3px solid #303032;border-radius:12px;box-sizing:border-box;"></div>
<svg style="left:2891.2px;top:645.5px" width="24" height="24" viewBox="0 0 24 24" fill="none" stroke="#ffffff" stroke-width="2" stroke-linecap="round" stroke-linejoin="round"><polyline points="4 17 10 11 4 5"/><line x1="12" x2="20" y1="19" y2="19"/></svg>
<div style="left:450px;top:1269px;width:387.562px;height:156px;background:#18181b;border:3px solid #303032;border-radius:12px;box-sizing:border-box;"></div>
<svg style="left:613.781px;top:1290px" width="60" height="60" viewBox="0 0 24 24" fill="none" stroke="#ffffff" stroke-width="2" stroke-linecap="round" stroke-linejoin="round"><rect width="20" height="8" x="2" y="2" rx="2" ry="2"/><rect width="20" height="8" x="2" y="14" rx="2" ry="2"/><line x1="6" x2="6.01" y1="6" y2="6"/><line x1="6" x2="6.01" y1="18" y2="18"/></svg>
<div style="left:861.562px;top:1269px;width:387.562px;height:156px;background:#18181b;border:3px solid #303032;border-radius:12px;box-sizing:border-box;"></div>
<svg style="left:1025.344px;top:1290px" width="60" height="60" viewBox="0 0 24 24" fill="none" stroke="#ffffff" stroke-width="2" stroke-linecap="round" stroke-linejoin="round"><path d="m15.5 7.5 2.3 2.3a1 1 0 0 0 1.4 0l2.1-2.1a1 1 0 0 0 0-1.4L19 4"/><path d="m21 2-9.6 9.6"/><circle cx="7.5" cy="15.5" r="5.5"/></svg>
<div style="left:1273.125px;top:1269px;width:387.562px;height:156px;background:#18181b;border:3px solid #303032;border-radius:12px;box-sizing:border-box;"></div>
<svg style="left:1436.906px;top:1290px" width="60" height="60" viewBox="0 0 24 24" fill="none" stroke="#ffffff" stroke-width="2" stroke-linecap="round" stroke-linejoin="round"><path d="M12.22 2h-.44a2 2 0 0 0-2 2v.18a2 2 0 0 1-1 1.73l-.43.25a2 2 0 0 1-2 0l-.15-.08a2 2 0 0 0-2.73.73l-.22.38a2 2 0 0 0 .73 2.73l.15.1a2 2 0 0 1 1 1.72v.51a2 2 0 0 1-1 1.74l-.15.09a2 2 0 0 0-.73 2.73l.22.38a2 2 0 0 0 2.73.73l.15-.08a2 2 0 0 1 2 0l.43.25a2 2 0 0 1 1 1.73V20a2 2 0 0 0 2 2h.44a2 2 0 0 0 2-2v-.18a2 2 0 0 1 1-1.73l.43-.25a2 2 0 0 1 2 0l.15.08a2 2 0 0 0 2.73-.73l.22-.39a2 2 0 0 0-.73-2.73l-.15-.08a2 2 0 0 1-1-1.74v-.5a2 2 0 0 1 1-1.74l.15-.09a2 2 0 0 0 .73-2.73l-.22-.38a2 2 0 0 0-2.73-.73l-.15.08a2 2 0 0 1-2 0l-.43-.25a2 2 0 0 1-1-1.73V4a2 2 0 0 0-2-2z"/><circle cx="12" cy="12" r="3"/></svg>
<div style="left:1684.688px;top:1269px;width:387.562px;height:156px;background:#18181b;border:3px solid #303032;border-radius:12px;box-sizing:border-box;"></div>
<svg style="left:1848.469px;top:1290px" width="60" height="60" viewBox="0 0 24 24" fill="none" stroke="#ffffff" stroke-width="2" stroke-linecap="round" stroke-linejoin="round"><path d="M19 21v-2a4 4 0 0 0-4-4H9a4 4 0 0 0-4 4v2"/><circle cx="12" cy="7" r="4"/></svg>
<div style="left:2138.25px;top:1269px;width:305.25px;height:108px;background:#18181b;border:3px solid #303032;border-radius:12px;box-sizing:border-box;"></div>
<svg style="left:2159.25px;top:1293.3px" width="24" height="24" viewBox="0 0 24 24" fill="none" stroke="#ffffff" stroke-width="2" stroke-linecap="round" stroke-linejoin="round"><rect width="20" height="8" x="2" y="2" rx="2" ry="2"/><rect width="20" height="8" x="2" y="14" rx="2" ry="2"/><line x1="6" x2="6.01" y1="6" y2="6"/><line x1="6" x2="6.01" y1="18" y2="18"/></svg>
<div style="left:2467.5px;top:1269px;width:305.25px;height:108px;background:#18181b;border:3px solid #303032;border-radius:12px;box-sizing:border-box;"></div>
<svg style="left:2488.5px;top:1293.3px" width="24" height="24" viewBox="0 0 24 24" fill="none" stroke="#ffffff" stroke-width="2" stroke-linecap="round" stroke-linejoin="round"><rect width="20" height="8" x="2" y="2" rx="2" ry="2"/><rect width="20" height="8" x="2" y="14" rx="2" ry="2"/><line x1="6" x2="6.01" y1="6" y2="6"/><line x1="6" x2="6.01" y1="18" y2="18"/></svg>
<div style="left:2796.75px;top:1269px;width:305.25px;height:108px;background:#18181b;border:3px solid #303032;border-radius:12px;box-sizing:border-box;"></div>
<svg style="left:2817.75px;top:1293.3px" width="24" height="24" viewBox="0 0 24 24" fill="none" stroke="#ffffff" stroke-width="2" stroke-linecap="round" stroke-linejoin="round"><rect width="20" height="8" x="2" y="2" rx="2" ry="2"/><rect width="20" height="8" x="2" y="14" rx="2" ry="2"/><line x1="6" x2="6.01" y1="6" y2="6"/><line x1="6" x2="6.01" y1="18" y2="18"/></svg>
<div style="left:3126px;top:1269px;width:305.25px;height:108px;background:#18181b;border:3px solid #303032;border-radius:12px;box-sizing:border-box;"></div>
<svg style="left:3147px;top:1293.3px" width="24" height="24" viewBox="0 0 24 24" fill="none" stroke="#ffffff" stroke-width="2" stroke-linecap="round" stroke-linejoin="round"><rect width="20" height="8" x="2" y="2" rx="2" ry="2"/><rect width="20" height="8" x="2" y="14" rx="2" ry="2"/><line x1="6" x2="6.01" y1="6" y2="6"/><line x1="6" x2="6.01" y1="18" y2="18"/></svg>
<div style="left:3455.25px;top:1269px;width:305.25px;height:108px;background:#18181b;border:3px solid #303032;border-radius:12px;box-sizing:border-box;"></div>
<svg style="left:3476.25px;top:1293.3px" width="24" height="24" viewBox="0 0 24 24" fill="none" stroke="#ffffff" stroke-width="2" stroke-linecap="round" stroke-linejoin="round"><rect width="20" height="8" x="2" y="2" rx="2" ry="2"/><rect width="20" height="8" x="2" y="14" rx="2" ry="2"/><line x1="6" x2="6.01" y1="6" y2="6"/><line x1="6" x2="6.01" y1="18" y2="18"/></svg>
<span style="left:38.95px;top:34.8px;font-size:26.2px;line-height:37px;color:#ffffff;font-weight:700;letter-spacing:0.306px;-webkit-text-stroke:0.3px #ffffff;">Termix</span>
<span style="left:142.59px;top:116.93px;font-size:19.89px;line-height:28px;color:#ffffff;letter-spacing:0.891px;-webkit-text-stroke:0.78px #ffffff;">Host Manager</span>
<span style="left:48.4px;top:193.8px;font-size:20.6px;line-height:29px;color:#8d8d98;letter-spacing:-0.141px;">Search hosts by any info...</span>
<span style="left:90.85px;top:269px;font-size:21.9px;line-height:31px;color:#ffffff;letter-spacing:1.29px;-webkit-text-stroke:1.1px #ffffff;">Hetzner</span>
<span style="left:76.69px;top:347.53px;font-size:19.89px;line-height:28px;color:#ffffff;letter-spacing:0.363px;-webkit-text-stroke:0.78px #ffffff;">Hetzner 1</span>
<span style="left:90.85px;top:440px;font-size:21.9px;line-height:31px;color:#ffffff;letter-spacing:1.444px;-webkit-text-stroke:1.1px #ffffff;">Laptop</span>
<span style="left:76.69px;top:518.53px;font-size:19.89px;line-height:28px;color:#ffffff;letter-spacing:0.636px;-webkit-text-stroke:0.78px #ffffff;">Docker</span>
<span style="left:76.69px;top:608.53px;font-size:19.89px;line-height:28px;color:#ffffff;letter-spacing:0.23px;-webkit-text-stroke:0.78px #ffffff;">Game Servers</span>
<span style="left:77.69px;top:686.53px;font-size:19.89px;line-height:28px;color:#ffffff;letter-spacing:0.755px;-webkit-text-stroke:0.78px #ffffff;">Open Media</span>
<span style="left:77.69px;top:716.53px;font-size:19.89px;line-height:28px;color:#ffffff;letter-spacing:0.653px;-webkit-text-stroke:0.78px #ffffff;">Vault</span>
<span style="left:76.69px;top:794.53px;font-size:19.89px;line-height:28px;color:#ffffff;letter-spacing:0.857px;-webkit-text-stroke:0.78px #ffffff;">Proxmox</span>
<span style="left:90.85px;top:887px;font-size:21.9px;line-height:31px;color:#ffffff;letter-spacing:0.88px;-webkit-text-stroke:1.1px #ffffff;">Oracle</span>
<span style="left:77.69px;top:965.53px;font-size:19.89px;line-height:28px;color:#ffffff;letter-spacing:0.227px;-webkit-text-stroke:0.78px #ffffff;">Oracle Sam</span>
<span style="left:77.69px;top:1055.53px;font-size:19.89px;line-height:28px;color:#ffffff;letter-spacing:-0.192px;-webkit-text-stroke:0.78px #ffffff;">Oracle 1</span>
<span style="left:90.85px;top:1148px;font-size:21.9px;line-height:31px;color:#ffffff;letter-spacing:0.979px;-webkit-text-stroke:1.1px #ffffff;">RackNerd</span>
<span style="left:76.69px;top:1226.53px;font-size:19.89px;line-height:28px;color:#ffffff;letter-spacing:0.126px;-webkit-text-stroke:0.78px #ffffff;">RackNerd 1</span>
<span style="left:76.69px;top:1316.53px;font-size:19.89px;line-height:28px;color:#ffffff;letter-spacing:0.459px;-webkit-text-stroke:0.78px #ffffff;">RackNerd 2</span>
<span style="left:90.85px;top:1409px;font-size:21.9px;line-height:31px;color:#ffffff;letter-spacing:-1.305px;-webkit-text-stroke:1.1px #ffffff;">RPI</span>
<span style="left:76.69px;top:1487.53px;font-size:19.89px;line-height:28px;color:#ffffff;letter-spacing:-1.185px;-webkit-text-stroke:0.78px #ffffff;">RPI 1</span>
<span style="left:76.69px;top:1577.53px;font-size:19.89px;line-height:28px;color:#ffffff;letter-spacing:-0.435px;-webkit-text-stroke:0.78px #ffffff;">RPI 2</span>
<span style="left:75.3px;top:2096.2px;font-size:20.6px;line-height:29px;color:#ffffff;letter-spacing:0.143px;">test</span>
<span style="left:417.48px;top:137.73px;font-size:34.28px;line-height:48px;color:#ffffff;letter-spacing:1.134px;-webkit-text-stroke:1.35px #ffffff;">Dashboard</span>
<span style="left:3276.99px;top:146.73px;font-size:19.89px;line-height:28px;color:#ffffff;letter-spacing:1.202px;-webkit-text-stroke:0.78px #ffffff;">GitHub</span>
<span style="left:3413.89px;top:146.73px;font-size:19.89px;line-height:28px;color:#ffffff;letter-spacing:1.004px;-webkit-text-stroke:0.78px #ffffff;">Support</span>
<span style="left:3558.69px;top:146.73px;font-size:19.89px;line-height:28px;color:#ffffff;letter-spacing:0.8px;-webkit-text-stroke:0.78px #ffffff;">Discord</span>
<span style="left:3698.69px;top:146.73px;font-size:19.89px;line-height:28px;color:#ffffff;letter-spacing:0.976px;-webkit-text-stroke:0.78px #ffffff;">Donate</span>
<span style="left:504.35px;top:261.41px;font-size:27.91px;line-height:39px;color:#ffffff;letter-spacing:0.951px;-webkit-text-stroke:1.1px #ffffff;">Server Overview</span>
<span style="left:2191.6px;top:261.41px;font-size:27.91px;line-height:39px;color:#ffffff;letter-spacing:1.25px;-webkit-text-stroke:1.1px #ffffff;">Recent Activity</span>
<span style="left:504.35px;top:1212.41px;font-size:27.91px;line-height:39px;color:#ffffff;letter-spacing:1.346px;-webkit-text-stroke:1.1px #ffffff;">Quick Actions</span>
<span style="left:2192.6px;top:1212.41px;font-size:27.91px;line-height:39px;color:#ffffff;letter-spacing:0.574px;-webkit-text-stroke:1.1px #ffffff;">Server Stats</span>
<span style="left:513.4px;top:348.7px;font-size:23.5px;line-height:33px;color:#ffffff;letter-spacing:-0.086px;">Version</span>
<span style="left:513.1px;top:405.8px;font-size:23.5px;line-height:33px;color:#ffffff;letter-spacing:0.547px;">Uptime</span>
<span style="left:513.1px;top:465.8px;font-size:23.5px;line-height:33px;color:#ffffff;letter-spacing:-0.39px;">Database</span>
<span style="left:1848px;top:350px;font-size:20.6px;line-height:29px;color:#a1a1aa;letter-spacing:-0.22px;">Updates &amp; Releases</span>
<span style="left:1641.1px;top:350px;font-size:20.6px;line-height:29px;color:#fdc700;letter-spacing:0.142px;">Update Available</span>
<span style="left:1550.4px;top:348.7px;font-size:23.5px;line-height:33px;color:#a1a1aa;letter-spacing:-0.749px;">v1.8.0</span>
<span style="left:1937.8px;top:405.8px;font-size:23.5px;line-height:33px;color:#a1a1aa;letter-spacing:0.253px;">0d 0h 45m</span>
<span style="left:1970.3px;top:466.4px;font-size:23.5px;line-height:33px;color:#05df72;letter-spacing:0.128px;">Healthy</span>
<span style="left:513.4px;top:565.1px;font-size:23.5px;line-height:33px;color:#ffffff;letter-spacing:-0.374px;">Total Servers</span>
<span style="left:1211.98px;top:564.69px;font-size:22.69px;line-height:32px;color:#a1a1aa;letter-spacing:-1.361px;-webkit-text-stroke:0.9px #a1a1aa;">11</span>
<span style="left:1330.4px;top:565.1px;font-size:23.5px;line-height:33px;color:#ffffff;letter-spacing:-0.079px;">Total Tunnels</span>
<span style="left:2038.8px;top:564.69px;font-size:22.69px;line-height:32px;color:#a1a1aa;-webkit-text-stroke:0.9px #a1a1aa;">0</span>
<span style="left:513.4px;top:661.1px;font-size:23.5px;line-height:33px;color:#ffffff;letter-spacing:0.007px;">Total Credentials</span>
<span style="left:1221.55px;top:660.69px;font-size:22.69px;line-height:32px;color:#a1a1aa;-webkit-text-stroke:0.9px #a1a1aa;">4</span>
<span style="left:3689px;top:265.6px;font-size:20.6px;line-height:29px;color:#ffffff;letter-spacing:-0.844px;">Reset</span>
<span style="left:2281.99px;top:332.93px;font-size:19.89px;line-height:28px;color:#ffffff;letter-spacing:0.456px;-webkit-text-stroke:0.78px #ffffff;">Docker</span>
<span style="left:2611.24px;top:332.93px;font-size:19.89px;line-height:28px;color:#ffffff;letter-spacing:0.456px;-webkit-text-stroke:0.78px #ffffff;">Docker</span>
<span style="left:2940.49px;top:332.93px;font-size:19.89px;line-height:28px;color:#ffffff;letter-spacing:0.456px;-webkit-text-stroke:0.78px #ffffff;">Docker</span>
<span style="left:3269.74px;top:332.93px;font-size:19.89px;line-height:28px;color:#ffffff;letter-spacing:0.456px;-webkit-text-stroke:0.78px #ffffff;">Docker</span>
<span style="left:3598.99px;top:332.93px;font-size:19.89px;line-height:28px;color:#ffffff;letter-spacing:0.456px;-webkit-text-stroke:0.78px #ffffff;">Docker</span>
<span style="left:2281.99px;top:410.93px;font-size:19.89px;line-height:28px;color:#ffffff;letter-spacing:0.456px;-webkit-text-stroke:0.78px #ffffff;">Docker</span>
<span style="left:2611.24px;top:410.93px;font-size:19.89px;line-height:28px;color:#ffffff;letter-spacing:0.456px;-webkit-text-stroke:0.78px #ffffff;">Docker</span>
<span style="left:2940.49px;top:410.93px;font-size:19.89px;line-height:28px;color:#ffffff;letter-spacing:0.456px;-webkit-text-stroke:0.78px #ffffff;">Docker</span>
<span style="left:3269.74px;top:410.93px;font-size:19.89px;line-height:28px;color:#ffffff;letter-spacing:0.456px;-webkit-text-stroke:0.78px #ffffff;">Docker</span>
<span style="left:3598.99px;top:410.93px;font-size:19.89px;line-height:28px;color:#ffffff;letter-spacing:0.456px;-webkit-text-stroke:0.78px #ffffff;">Docker</span>
<span style="left:2281.99px;top:488.93px;font-size:19.89px;line-height:28px;color:#ffffff;letter-spacing:0.456px;-webkit-text-stroke:0.78px #ffffff;">Docker</span>
<span style="left:2611.24px;top:488.93px;font-size:19.89px;line-height:28px;color:#ffffff;letter-spacing:0.456px;-webkit-text-stroke:0.78px #ffffff;">Docker</span>
<span style="left:2940.49px;top:488.93px;font-size:19.89px;line-height:28px;color:#ffffff;letter-spacing:0.456px;-webkit-text-stroke:0.78px #ffffff;">Docker</span>
<span style="left:3269.74px;top:488.93px;font-size:19.89px;line-height:28px;color:#ffffff;letter-spacing:0.456px;-webkit-text-stroke:0.78px #ffffff;">Docker</span>
<span style="left:3598.99px;top:488.93px;font-size:19.89px;line-height:28px;color:#ffffff;letter-spacing:0.456px;-webkit-text-stroke:0.78px #ffffff;">Docker</span>
<span style="left:2281.99px;top:566.93px;font-size:19.89px;line-height:28px;color:#ffffff;letter-spacing:0.456px;-webkit-text-stroke:0.78px #ffffff;">Docker</span>
<span style="left:2611.24px;top:566.93px;font-size:19.89px;line-height:28px;color:#ffffff;letter-spacing:0.456px;-webkit-text-stroke:0.78px #ffffff;">Docker</span>
<span style="left:2940.49px;top:566.93px;font-size:19.89px;line-height:28px;color:#ffffff;letter-spacing:0.456px;-webkit-text-stroke:0.78px #ffffff;">Docker</span>
<span style="left:3269.74px;top:566.93px;font-size:19.89px;line-height:28px;color:#ffffff;letter-spacing:0.456px;-webkit-text-stroke:0.78px #ffffff;">Docker</span>
<span style="left:3598.99px;top:566.93px;font-size:19.89px;line-height:28px;color:#ffffff;letter-spacing:0.456px;-webkit-text-stroke:0.78px #ffffff;">Docker</span>
<span style="left:2281.99px;top:644.93px;font-size:19.89px;line-height:28px;color:#ffffff;letter-spacing:0.456px;-webkit-text-stroke:0.78px #ffffff;">Docker</span>
<span style="left:2611.24px;top:644.93px;font-size:19.89px;line-height:28px;color:#ffffff;letter-spacing:0.456px;-webkit-text-stroke:0.78px #ffffff;">Docker</span>
<span style="left:2940.49px;top:644.93px;font-size:19.89px;line-height:28px;color:#ffffff;letter-spacing:0.456px;-webkit-text-stroke:0.78px #ffffff;">Docker</span>
<span style="left:599.67px;top:1376.53px;font-size:19.89px;line-height:28px;color:#ffffff;letter-spacing:0.855px;-webkit-text-stroke:0.78px #ffffff;">Add Host</span>
<span style="left:984.74px;top:1376.53px;font-size:19.89px;line-height:28px;color:#ffffff;letter-spacing:0.781px;-webkit-text-stroke:0.78px #ffffff;">Add Credential</span>
<span style="left:1394.65px;top:1376.53px;font-size:19.89px;line-height:28px;color:#ffffff;letter-spacing:0.829px;-webkit-text-stroke:0.78px #ffffff;">Admin Settings</span>
<span style="left:1823.36px;top:1376.53px;font-size:19.89px;line-height:28px;color:#ffffff;letter-spacing:0.495px;-webkit-text-stroke:0.78px #ffffff;">User Profile</span>
<span style="left:2195.09px;top:1292.73px;font-size:19.89px;line-height:28px;color:#ffffff;letter-spacing:0.221px;-webkit-text-stroke:0.78px #ffffff;">Game Servers</span>
<span style="left:2159.1px;top:1333.3px;font-size:18px;line-height:25px;color:#a1a1aa;letter-spacing:-0.487px;">CPU: N/A</span>
<span style="left:2342.5px;top:1333.3px;font-size:18px;line-height:25px;color:#a1a1aa;">RAM: N/A</span>
<span style="left:2524.34px;top:1292.73px;font-size:19.89px;line-height:28px;color:#ffffff;letter-spacing:0.656px;-webkit-text-stroke:0.78px #ffffff;">Docker</span>
<span style="left:2488.35px;top:1333.3px;font-size:18px;line-height:25px;color:#a1a1aa;letter-spacing:-1.08px;">CPU: 6%</span>
<span style="left:2670.45px;top:1333.3px;font-size:18px;line-height:25px;color:#a1a1aa;letter-spacing:-0.675px;">RAM: 30%</span>
<span style="left:2853.59px;top:1292.73px;font-size:19.89px;line-height:28px;color:#ffffff;letter-spacing:0.873px;-webkit-text-stroke:0.78px #ffffff;">Proxmox</span>
<span style="left:2817.6px;top:1333.3px;font-size:18px;line-height:25px;color:#a1a1aa;letter-spacing:-0.487px;">CPU: N/A</span>
<span style="left:3001px;top:1333.3px;font-size:18px;line-height:25px;color:#a1a1aa;">RAM: N/A</span>
<span style="left:3182.84px;top:1292.73px;font-size:19.89px;line-height:28px;color:#ffffff;letter-spacing:0.363px;-webkit-text-stroke:0.78px #ffffff;">Hetzner 1</span>
<span style="left:3146.85px;top:1333.3px;font-size:18px;line-height:25px;color:#a1a1aa;letter-spacing:-0.487px;">CPU: N/A</span>
<span style="left:3330.25px;top:1333.3px;font-size:18px;line-height:25px;color:#a1a1aa;">RAM: N/A</span>
<span style="left:3512.09px;top:1292.73px;font-size:19.89px;line-height:28px;color:#ffffff;letter-spacing:-1.185px;-webkit-text-stroke:0.78px #ffffff;">RPI 1</span>
<span style="left:3476.1px;top:1333.3px;font-size:18px;line-height:25px;color:#a1a1aa;letter-spacing:-0.487px;">CPU: N/A</span>
<span style="left:3659.5px;top:1333.3px;font-size:18px;line-height:25px;color:#a1a1aa;">RAM: N/A</span>
</div></body></html>
